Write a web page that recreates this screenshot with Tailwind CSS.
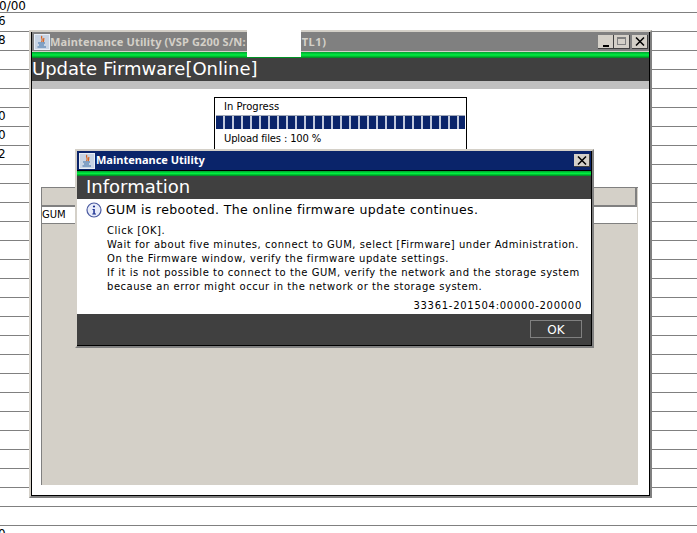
<!DOCTYPE html>
<html lang="en">
<head>
    <meta charset="UTF-8">
    <title>Maintenance Utility</title>
    <script src="https://cdn.jsdelivr.net/npm/@tailwindcss/browser@4"></script>
</head>
<body class="bg-white overflow-hidden font-['DejaVu_Sans',sans-serif] text-black">
    <div class="relative w-[697px] h-[533px] overflow-hidden">
        <!-- rows behind the windows -->
        <div class="text-[12px] leading-[16px]">
            <div class="h-[13px] border-b border-[#808080] flex items-end"><span class="-ml-[1px] -mb-[2px]">0/00</span></div>
            <div class="h-[19px] border-b border-[#808080]"><span class="-ml-[2px]">6</span></div>
            <div class="h-[19px] border-b border-[#808080]"><span class="-ml-[2px]">8</span></div>
            <div class="h-[19px] border-b border-[#808080]"></div>
            <div class="h-[19px] border-b border-[#808080]"></div>
            <div class="h-[19px] border-b border-[#808080]"></div>
            <div class="h-[19px] border-b border-[#808080]"><span class="-ml-[2px]">0</span></div>
            <div class="h-[19px] border-b border-[#808080]"><span class="-ml-[2px]">0</span></div>
            <div class="h-[19px] border-b border-[#808080]"><span class="-ml-[2px]">2</span></div>
            <div class="h-[19px] border-b border-[#808080]"></div>
            <div class="h-[19px] border-b border-[#808080]"></div>
            <div class="h-[19px] border-b border-[#808080]"></div>
            <div class="h-[19px] border-b border-[#808080]"></div>
            <div class="h-[19px] border-b border-[#808080]"></div>
            <div class="h-[19px] border-b border-[#808080]"></div>
            <div class="h-[19px] border-b border-[#808080]"></div>
            <div class="h-[19px] border-b border-[#808080]"></div>
            <div class="h-[19px] border-b border-[#808080]"></div>
            <div class="h-[19px] border-b border-[#808080]"></div>
            <div class="h-[19px] border-b border-[#808080]"></div>
            <div class="h-[19px] border-b border-[#808080]"></div>
            <div class="h-[19px] border-b border-[#808080]"></div>
            <div class="h-[19px] border-b border-[#808080]"></div>
            <div class="h-[19px] border-b border-[#808080]"></div>
            <div class="h-[19px] border-b border-[#808080]"></div>
            <div class="h-[19px] border-b border-[#808080]"></div>
            <div class="h-[19px] border-b border-[#808080]"></div>
            <div class="h-[19px] border-b border-[#808080]"></div>
            <div class="h-[19px]"><span class="-ml-[2px]">0</span></div>
        </div>

        <!-- main window -->
        <div class="absolute left-[29px] top-[30px] w-[623px] h-[468px] flex flex-col bg-white border-l-2 border-t-2 border-l-[#d4d0c8] border-t-[#d4d0c8] border-r-2 border-b-2 border-r-[#808080] border-b-[#808080]">
            <div class="flex flex-col h-full border-l border-r border-b border-black">
                <div class="h-[20px] bg-[#808080] flex items-center pl-[2px] text-[#d4d0c8] text-[11px] tracking-[0.15px] font-bold font-['Noto_Sans',sans-serif] whitespace-nowrap border-b border-[#d4d0c8]">
                    <svg width="16" height="16" viewBox="0 0 16 16" class="shrink-0">
                        <rect x="0.5" y="0.5" width="15" height="15" fill="#c8d4e4" stroke="#e8eef6"/>
                        <path d="M8 2 C6 4 10 5 7.5 8 M10 4 C9 6 10.5 6.500 9 8" stroke="#d8601c" stroke-width="1.200" fill="none"/>
                        <path d="M4 9 H11 M5 11 H10 M3.500 13 H12" stroke="#3a6ea5" stroke-width="1.100" fill="none"/>
                    </svg>
                    <span class="w-[244px] pt-[1px]">Maintenance Utility (VSP G200 S/N:</span>
                    <span class="tracking-[0.6px] pt-[1px]">CTL1)</span>
                    <div class="ml-auto flex items-center mr-[1px]">
                        <div class="w-[16px] h-[14px] bg-[#d4d0c8] border-r border-b border-[#404040] flex items-end justify-center pb-[1px]"><div class="w-[6px] h-[2px] bg-black"></div></div>
                        <div class="w-[16px] h-[14px] bg-[#d4d0c8] border-r border-b border-[#404040] flex items-center justify-center"><div class="w-[9px] h-[8px] border border-[#808080] border-t-2"></div></div>
                        <div class="ml-[2px] w-[16px] h-[14px] bg-[#d4d0c8] border-r border-b border-[#404040] flex items-center justify-center">
                            <svg width="10" height="9" viewBox="0 0 10 9"><path d="M1 0.500 L9 8.500 M9 0.500 L1 8.500" stroke="#000" stroke-width="1.500"/></svg>
                        </div>
                    </div>
                </div>
                <div class="h-[6px] bg-gradient-to-b from-[#00a030] via-[#00f040] to-[#008020]"></div>
                <div class="h-[23px] bg-[#404040] text-white text-[18px] leading-[21px] whitespace-nowrap">Update Firmware[Online]</div>
                <div class="h-[8px] bg-[#c0c0c0]"></div>
                <div class="pt-[8px]">
                    <div class="ml-[182px] w-[253px] h-[54px] border border-black border-b-0 bg-white text-[10px]">
                        <div class="h-[17px] pl-[9px] leading-[18px]">In Progress</div>
                        <div class="mx-[1px] h-[14px] border-t border-[#a0a8b8] bg-[repeating-linear-gradient(90deg,#0a246a_0,#0a246a_7px,#c0c8dc_7px,#c0c8dc_9px)]"></div>
                        <div class="h-[17px] pl-[9px] leading-[20px] tracking-[-0.15px]">Upload files : 100 %</div>
                    </div>
                    <div class="mt-[36px] ml-[9px] w-[597px] h-[298px] bg-[#d4d0c8] border-l border-[#808080] border-t border-t-[#808080]">
                        <div class="h-[19px] mr-[1px] border-b-2 border-r-2 border-[#808080]"></div>
                        <div class="h-[17px] mr-[1px] bg-white border-b border-[#808080] text-[10px] leading-[16px]">GUM</div>
                    </div>
                </div>
            </div>
        </div>
        <!-- redacted serial number -->
        <div class="absolute left-[247px] top-[30px] w-[54px] h-[27px] bg-white"></div>

        <!-- information dialog -->
        <div class="absolute left-[75px] top-[149px] w-[519px] h-[199px] flex flex-col bg-white border-l-2 border-t-2 border-l-[#d4d0c8] border-t-[#d4d0c8] border-r-2 border-b-2 border-r-[#808080] border-b-[#808080]">
            <div class="flex flex-col h-full border-r border-b border-black">
                <div class="h-[20px] bg-[#0a246a] border-b border-black flex items-center text-white text-[11px] font-bold font-['Noto_Sans',sans-serif] whitespace-nowrap">
                    <svg width="16" height="16" viewBox="0 0 16 16" class="shrink-0 ml-[2px]">
                        <rect x="0.5" y="0.5" width="15" height="15" fill="#c8d4e4" stroke="#e8eef6"/>
                        <path d="M8 2 C6 4 10 5 7.500 8 M10 4 C9 6 10.500 6.500 9 8" stroke="#d8601c" stroke-width="1.200" fill="none"/>
                        <path d="M4 9 H11 M5 11 H10 M3.500 13 H12" stroke="#3a6ea5" stroke-width="1.100" fill="none"/>
                    </svg>
                    <span class="ml-[1px]">Maintenance Utility</span>
                    <div class="ml-auto mr-[1px] w-[16px] h-[13px] bg-[#d4d0c8] border-r border-b border-[#404040] flex items-center justify-center">
                        <svg width="10" height="9" viewBox="0 0 10 9"><path d="M1 0.500 L9 8.500 M9 0.500 L1 8.500" stroke="#000" stroke-width="1.500"/></svg>
                    </div>
                </div>
                <div class="h-[5px] bg-gradient-to-b from-[#00a030] via-[#00f040] to-[#008020]"></div>
                <div class="h-[23px] bg-[#404040] text-white text-[18px] leading-[21px] pl-[9px] whitespace-nowrap">Information</div>
                <div class="h-[115px] relative text-[10px] leading-[14px] whitespace-nowrap">
                    <div class="flex items-center pt-[1px] pl-[9px] h-[21px]">
                        <svg width="16" height="16" viewBox="0 0 16 16" class="shrink-0">
                            <circle cx="8" cy="8" r="7" fill="#e8ecfa" stroke="#4a5aa0" stroke-width="1.200"/>
                            <circle cx="8" cy="4.500" r="1.100" fill="#1a2f90"/>
                            <path d="M6.500 7 H8.800 V11.500 H10 V12.500 H6.300 V11.500 H7.300 V8 H6.500 Z" fill="#1a2f90"/>
                        </svg>
                        <span class="ml-[4px] text-[12.5px] tracking-[0.35px]">GUM is rebooted. The online firmware update continues.</span>
                    </div>
                    <div class="pl-[30px] pt-[4px] tracking-[0.53px]">
                        <div>Click [OK].</div>
                        <div>Wait for about five minutes, connect to GUM, select [Firmware] under Administration.</div>
                        <div>On the Firmware window, verify the firmware update settings.</div>
                        <div>If it is not possible to connect to the GUM, verify the network and the storage system</div>
                        <div>because an error might occur in the network or the storage system.</div>
                    </div>
                    <div class="text-right pr-[9px] pt-[5px] tracking-[0.72px]">33361-201504:00000-200000</div>
                </div>
                <div class="flex-1 bg-[#404040] flex justify-end items-start pt-[6px] pr-[9px]">
                    <div class="w-[52px] h-[18px] border border-[#808080] bg-[#404040] text-white text-[12px] leading-[19px] text-center">OK</div>
                </div>
            </div>
        </div>
    </div>
</body>
</html>
